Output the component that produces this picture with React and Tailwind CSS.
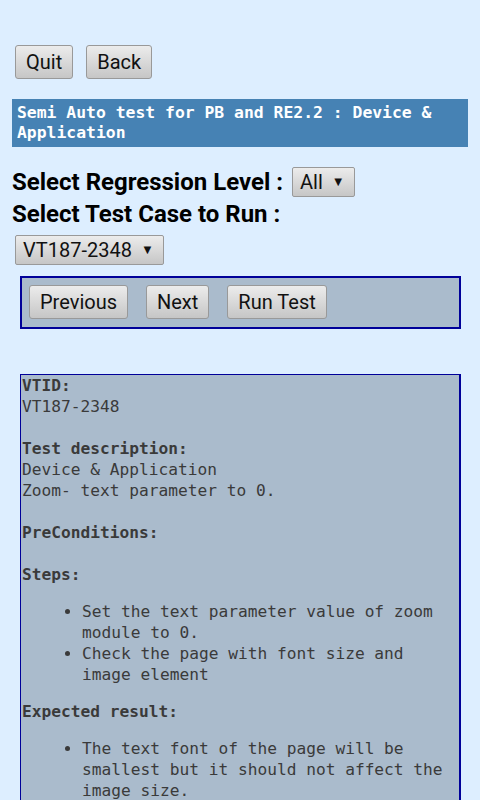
import React from "react";

const btn =
  "h-[34px] px-[10px] border border-[#999] rounded-[3px] bg-gradient-to-b from-[#ececec] to-[#c6c6c6] text-[20px] leading-[32px] text-[#111] font-['Roboto',sans-serif]";

function Button({ children }) {
  return <button className={btn}>{children}</button>;
}

function Select({ value }) {
  return (
    <div className="h-[30px] pl-[7px] pr-[9px] border border-[#999] rounded-[2px] bg-gradient-to-b from-[#ececec] to-[#c6c6c6] flex items-center gap-[9px] text-[20px] font-normal text-[#111] font-['Roboto',sans-serif]">
      <span>{value}</span>
      <span className="text-[13px]">▼</span>
    </div>
  );
}

export default function App() {
  return (
    <div className="h-[800px] overflow-hidden bg-[#ddeeff] px-3">
      {/* top buttons */}
      <div className="pt-[45px] pl-[3px] flex gap-[13px]">
        <Button>Quit</Button>
        <Button>Back</Button>
      </div>

      {/* title */}
      <div className="mt-[20px] h-[48px] bg-[#4682b4] px-[5px] pt-[4px] text-white font-bold text-[16.4px] leading-[20px] font-['DejaVu_Sans_Mono',monospace]">
        Semi Auto test for PB and RE2.2 : Device &amp; Application
      </div>

      {/* selects */}
      <div className="font-['Roboto',sans-serif] font-bold text-[24px] text-black">
        <div className="mt-[20px] h-[30px] flex items-center gap-[9px]">
          <span>Select Regression Level :</span>
          <Select value="All" />
        </div>
        <div className="mt-[3px] h-[28px] leading-[28px]">Select Test Case to Run :</div>
        <div className="mt-[7px] pl-[3px] flex">
          <Select value="VT187-2348" />
        </div>
      </div>

      {/* navigation box */}
      <div className="mt-[11px] ml-[8px] w-[441px] h-[53px] border-2 border-[#000099] bg-[#aabbcc] flex gap-[18px] px-[7px] pt-[7px]">
        <Button>Previous</Button>
        <Button>Next</Button>
        <Button>Run Test</Button>
      </div>

      {/* test details */}
      <div className="mt-[45px] ml-[8px] w-[441px] border border-r-2 border-[#000099] bg-[#aabbcc] pl-[1px] pr-[8px] text-[#3a3a3a] text-[16.2px] leading-[21px] font-['DejaVu_Sans_Mono',monospace]">
        <div className="font-bold">VTID:</div>
        <div>VT187-2348</div>
        <br />
        <div className="font-bold">Test description:</div>
        <div>Device &amp; Application</div>
        <div>Zoom- text parameter to 0.</div>
        <br />
        <div className="font-bold">PreConditions:</div>
        <br />
        <div className="font-bold">Steps:</div>
        <ul className="my-[16px] pl-[60px] list-disc">
          <li>Set the text parameter value of zoom module to 0.</li>
          <li>Check the page with font size and image element</li>
        </ul>
        <div className="font-bold">Expected result:</div>
        <ul className="my-[16px] pl-[60px] list-disc">
          <li>The text font of the page will be smallest but it should not affect the image size.</li>
        </ul>
      </div>
    </div>
  );
}
